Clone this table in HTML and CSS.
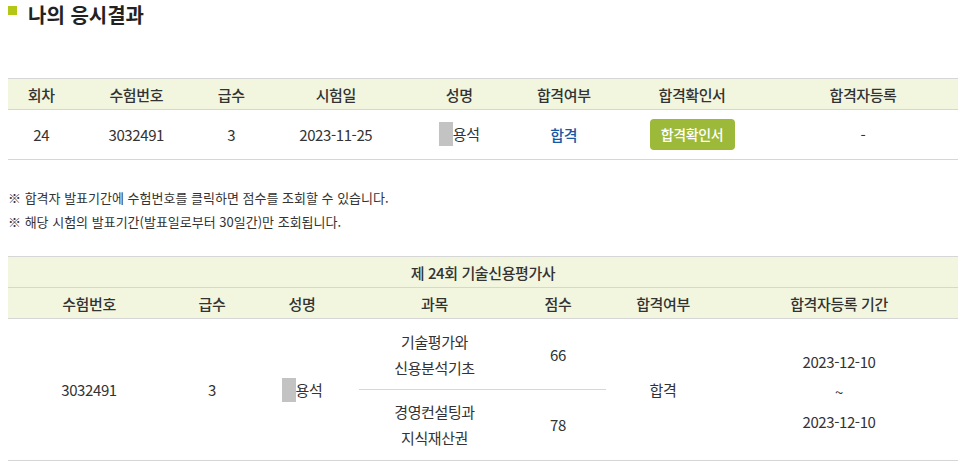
FILE: index.html
```html
<!DOCTYPE html>
<html lang="ko">
<head>
<meta charset="utf-8">
<title>나의 응시결과</title>
<link rel="stylesheet" href="styles.css">
</head>
<body>
<div class="page">
  <h2 class="title"><span class="bullet"></span>나의 응시결과</h2>

  <table class="result">
    <colgroup>
      <col style="width:7%"><col style="width:13%"><col style="width:7%"><col style="width:15%">
      <col style="width:11%"><col style="width:11%"><col style="width:16%"><col style="width:20%">
    </colgroup>
    <thead>
      <tr>
        <th>회차</th><th>수험번호</th><th>급수</th><th>시험일</th><th>성명</th><th>합격여부</th><th>합격확인서</th><th>합격자등록</th>
      </tr>
    </thead>
    <tbody>
      <tr>
        <td>24</td><td>3032491</td><td>3</td><td>2023-11-25</td>
        <td><span class="mask"></span>용석</td>
        <td><a class="pass-link">합격</a></td>
        <td><span class="btn">합격확인서</span></td>
        <td>-</td>
      </tr>
    </tbody>
  </table>

  <ul class="notes">
    <li>※ 합격자 발표기간에 수험번호를 클릭하면 점수를 조회할 수 있습니다.</li>
    <li>※ 해당 시험의 발표기간(발표일로부터 30일간)만 조회됩니다.</li>
  </ul>

  <table class="detail">
    <colgroup>
      <col style="width:162px"><col style="width:84px"><col style="width:105px"><col style="width:151px">
      <col style="width:96px"><col style="width:114px"><col style="width:238px">
    </colgroup>
    <thead>
      <tr><th colspan="7" class="caption">제 24회 기술신용평가사</th></tr>
      <tr>
        <th>수험번호</th><th>급수</th><th class="name">성명</th><th>과목</th><th>점수</th><th>합격여부</th><th>합격자등록 기간</th>
      </tr>
    </thead>
    <tbody>
      <tr class="first">
        <td rowspan="2">3032491</td>
        <td rowspan="2">3</td>
        <td rowspan="2" class="name"><span class="mask"></span>용석</td>
        <td class="subj split">기술평가와<br>신용분석기초</td>
        <td class="split">66</td>
        <td rowspan="2">합격</td>
        <td rowspan="2" class="period">2023-12-10<br>~<br>2023-12-10</td>
      </tr>
      <tr>
        <td class="subj">경영컨설팅과<br>지식재산권</td>
        <td>78</td>
      </tr>
    </tbody>
  </table>
</div>
</body>
</html>
```

FILE: styles.css
```css
* { box-sizing: border-box; }
html, body { margin: 0; padding: 0; background: #fff; }
body {
  font-family: "Noto Sans CJK KR", "Noto Sans", sans-serif;
  color: #333;
}
.page { padding: 0 6px 0 8px; width: 964px; }

.title {
  margin: 0;
  height: 34px;
  display: flex;
  align-items: center;
  gap: 11px;
  font-size: 20px;
  font-weight: 700;
  color: #222;
  letter-spacing: 0;
  line-height: 30px;
  transform: translateY(-2px);
}
.bullet {
  width: 9px;
  height: 9px;
  background: #b4c716;
  align-self: flex-start;
  margin-top: 8px;
}

table {
  width: 950px;
  border-collapse: collapse;
  table-layout: fixed;
  font-size: 15px;
  letter-spacing: -0.4px;
}
th, td { text-align: center; padding: 0; }
th {
  background: #f2f6df;
  font-weight: 500;
  color: #333;
  height: 31px;
  border-bottom: 1px solid #d6d6d6;
}
thead tr:first-child th { border-top: 1px solid #d6d6d6; }

.result { margin-top: 44px; }
.result td { height: 50px; border-bottom: 1px solid #d6d6d6; color: #333; }
.mask {
  display: inline-block;
  width: 14px;
  height: 24px;
  background: #c3c3c3;
  vertical-align: middle;
  margin-top: -3px;
}
.pass-link { color: #1559a6; font-weight: 500; }
.btn {
  display: inline-block;
  width: 85px;
  height: 31px;
  line-height: 31px;
  background: #9cb93a;
  color: #fff;
  border-radius: 4px;
  font-size: 14px;
  font-weight: 500;
}

.notes {
  list-style: none;
  margin: 0;
  padding: 26px 0 0;
  font-size: 13px;
  letter-spacing: 0;
  line-height: 24px;
  color: #333;
}

.detail { margin-top: 22px; }
.detail th.caption { height: 31px; }
.detail td {
  line-height: 26px;
  height: 71px;
}
.detail tr.first td.subj, .detail tr.first td.split { padding-top: 2px; }
.detail tbody tr:last-child td,
.detail td[rowspan] { border-bottom: 1px solid #d6d6d6; }
.detail td.split { border-bottom: 1px solid #d6d6d6; }
.detail .name { padding-right: 9px; }
.detail .period { line-height: 30px; padding-top: 4px; }
```
